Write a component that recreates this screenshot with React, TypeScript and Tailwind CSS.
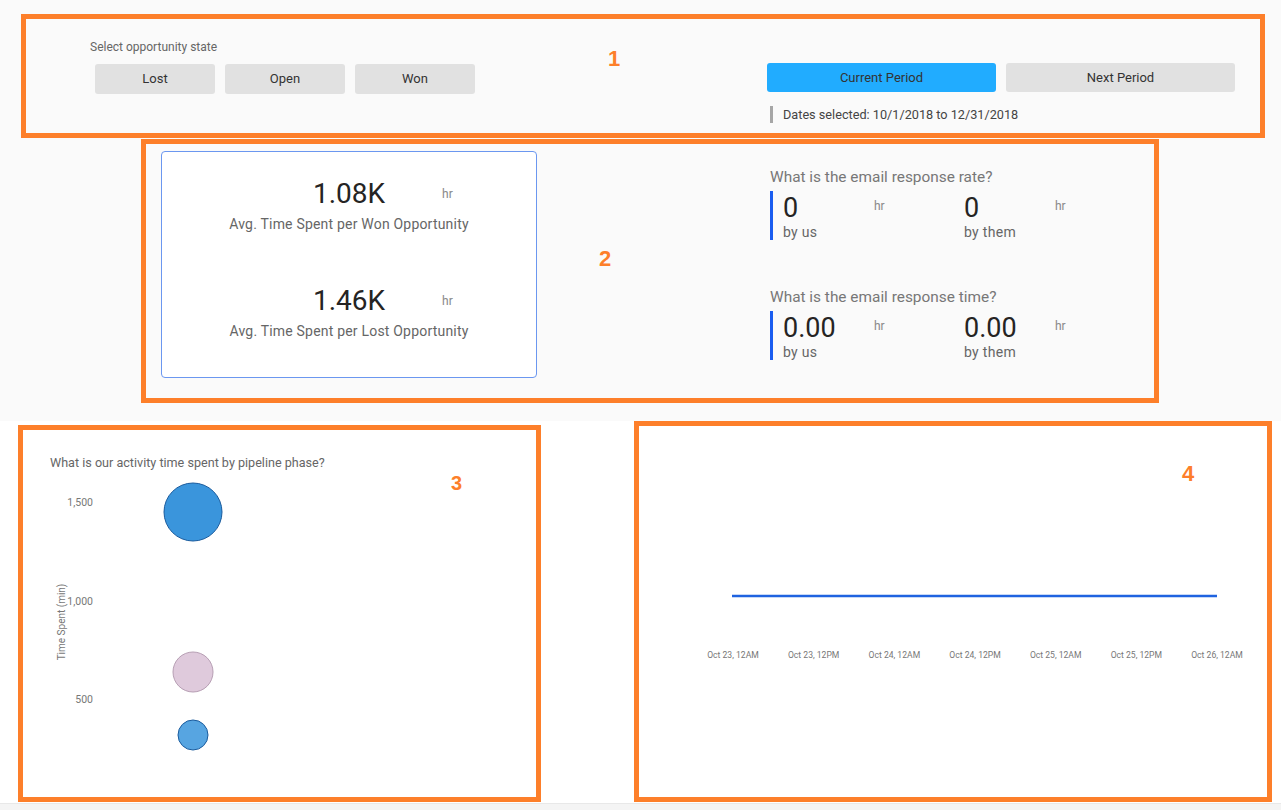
import React from 'react';

const stateButtons = ['Lost', 'Open', 'Won'];

const responseBlocks = [
  { question: 'What is the email response rate?', us: '0', them: '0' },
  { question: 'What is the email response time?', us: '0.00', them: '0.00' },
];

const avgCards = [
  { value: '1.08K', label: 'Avg. Time Spent per Won Opportunity' },
  { value: '1.46K', label: 'Avg. Time Spent per Lost Opportunity' },
];

const timeLabels = [
  'Oct 23, 12AM',
  'Oct 23, 12PM',
  'Oct 24, 12AM',
  'Oct 24, 12PM',
  'Oct 25, 12AM',
  'Oct 25, 12PM',
  'Oct 26, 12AM',
];

const Metric = ({ value, label }: { value: string; label: string }) => (
  <div className="flex w-[181px]">
    <div className="w-[91px]">
      <div className="text-[27px] leading-none text-[#252423] pt-[4px]">{value}</div>
      <div className="text-[14px] leading-[16px] mt-[2px] text-[#666] tracking-[0.3px]">{label}</div>
    </div>
    <span className="text-[12px] leading-[14px] text-[#888] mt-[8px]">hr</span>
  </div>
);

export default function App() {
  return (
    <div className="w-[1281px] h-[810px] overflow-hidden bg-[#fafafa] font-['Roboto',sans-serif]">
      {/* top section */}
      <section className="h-[421px] pt-[14px]">
        {/* Box 1 - filters */}
        <div className="ml-[21px] w-[1244px] h-[124px] border-[5px] border-[#fd7f2a] flex">
          <div className="ml-[64px] pt-[20px]">
            <div className="text-[12px] leading-[16px] text-[#666]">Select opportunity state</div>
            <div className="flex gap-[10px] mt-[9px] ml-[5px]">
              {stateButtons.map((b) => (
                <button
                  key={b}
                  className="w-[120px] h-[30px] bg-[#e1e1e1] rounded-[3px] text-[13px] text-[#333]"
                >
                  {b}
                </button>
              ))}
            </div>
          </div>
          <div className="ml-[133px] mt-[29px] text-[22px] leading-none font-bold text-[#fd7f2a] font-['Liberation_Sans',sans-serif]">
            1
          </div>
          <div className="ml-auto mr-[25px] pt-[44px]">
            <div className="flex gap-[10px]">
              <button className="w-[229px] h-[29px] bg-[#21acff] rounded-[3px] text-[13px] text-[#333]">
                Current Period
              </button>
              <button className="w-[229px] h-[29px] bg-[#e1e1e1] rounded-[3px] text-[13px] text-[#333]">
                Next Period
              </button>
            </div>
            <div className="flex items-center mt-[14px] ml-[3px]">
              <div className="w-[3px] h-[17px] bg-[#a6a6a6]" />
              <span className="ml-[10px] text-[12.7px] leading-[16px] text-[#444]">
                Dates selected: 10/1/2018 to 12/31/2018
              </span>
            </div>
          </div>
        </div>

        {/* Box 2 - KPIs */}
        <div className="ml-[141px] mt-[1px] w-[1018px] h-[264px] border-[5px] border-[#fd7f2a] flex">
          <div className="ml-[15px] mt-[7px] w-[376px] h-[227px] bg-white border border-[#6b97f0] rounded-[4px] pt-[28px]">
            {avgCards.map((c, i) => (
              <div key={c.label} className={i === 1 ? 'mt-[54px]' : ''}>
                <div className="grid grid-cols-[1fr_auto_1fr]">
                  <div />
                  <div className="text-[28px] leading-none text-[#252423]">{c.value}</div>
                  <div className="pl-[57px] text-[12px] leading-[14px] text-[#888] mt-[7px]">hr</div>
                </div>
                <div className="text-center text-[14px] leading-[18px] mt-[7px] text-[#666] tracking-[0.2px]">
                  {c.label}
                </div>
              </div>
            ))}
          </div>
          <div className="w-[233px] pl-[62px] pt-[104px]">
            <span className="text-[22px] leading-none font-bold text-[#fd7f2a] font-['Liberation_Sans',sans-serif]">
              2
            </span>
          </div>
          <div className="pt-[23px]">
            {responseBlocks.map((r, i) => (
              <div key={r.question} className={i === 1 ? 'mt-[47px]' : ''}>
                <div className="text-[15.4px] leading-[20px] text-[#777]">{r.question}</div>
                <div className="flex mt-[4px] h-[49px] border-l-[3px] border-[#1a5df0] pl-[10px]">
                  <Metric value={r.us} label="by us" />
                  <Metric value={r.them} label="by them" />
                </div>
              </div>
            ))}
          </div>
        </div>
      </section>

      {/* bottom section */}
      <section className="h-[382px] bg-white flex items-start">
        {/* Box 3 - bubble chart */}
        <div className="relative ml-[18px] mt-[4px] w-[523px] h-[377px] border-[5px] border-[#fd7f2a]">
          <div className="pl-[27px] pt-[25px] text-[12.6px] leading-[16px] text-[#666]">
            What is our activity time spent by pipeline phase?
          </div>
          <svg width="513" height="320" className="block mt-[4px]">
            <g fontSize="10.5" fill="#777" textAnchor="end" fontFamily="Roboto, sans-serif">
              <text x="70" y="28" dominantBaseline="middle">1,500</text>
              <text x="70" y="127" dominantBaseline="middle">1,000</text>
              <text x="70" y="225" dominantBaseline="middle">500</text>
            </g>
            <text
              x="39"
              y="147"
              fontSize="10"
              fill="#777"
              textAnchor="middle"
              dominantBaseline="middle"
              fontFamily="Roboto, sans-serif"
              transform="rotate(-90 39 147)"
            >
              Time Spent (min)
            </text>
            <circle cx="170" cy="37" r="29" fill="#3a95dc" stroke="#1b5c9e" strokeWidth="1" />
            <circle cx="170" cy="197" r="20" fill="#dfcadc" stroke="#b79fb4" strokeWidth="1" />
            <circle cx="170" cy="260" r="15" fill="#57a5e1" stroke="#1b5c9e" strokeWidth="1" />
          </svg>
          <span className="absolute left-[428px] top-[43px] text-[20px] leading-none font-bold text-[#fd7f2a] font-['Liberation_Sans',sans-serif]">
            3
          </span>
        </div>

        {/* Box 4 - line chart */}
        <div className="relative ml-[93px] w-[638px] h-[381px] border-[5px] border-[#fd7f2a]">
          <svg width="628" height="371" className="block">
            <line x1="93" y1="170" x2="578" y2="170" stroke="#1f63e0" strokeWidth="2.5" />
            <g fontSize="8.6" fill="#777" textAnchor="middle" fontFamily="Roboto, sans-serif">
              {timeLabels.map((t, i) => (
                <text key={t} x={94 + i * 80.67} y="230" dominantBaseline="middle">
                  {t}
                </text>
              ))}
            </g>
          </svg>
          <span className="absolute left-[543px] top-[37px] text-[22px] leading-none font-bold text-[#fd7f2a] font-['Liberation_Sans',sans-serif]">
            4
          </span>
        </div>
      </section>
      <div className="h-[7px] bg-[#f4f4f4] border-t border-[#e8e8e8]" />
    </div>
  );
}
